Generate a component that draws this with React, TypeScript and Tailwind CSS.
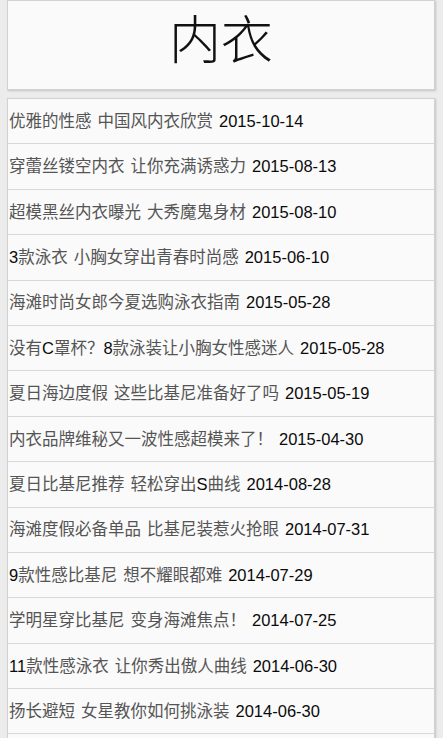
import React from "react";

const items: string[] = [
  "优雅的性感 中国风内衣欣赏 2015-10-14",
  "穿蕾丝镂空内衣 让你充满诱惑力 2015-08-13",
  "超模黑丝内衣曝光 大秀魔鬼身材 2015-08-10",
  "3款泳衣 小胸女穿出青春时尚感 2015-06-10",
  "海滩时尚女郎今夏选购泳衣指南 2015-05-28",
  "没有C罩杯？8款泳装让小胸女性感迷人 2015-05-28",
  "夏日海边度假 这些比基尼准备好了吗 2015-05-19",
  "内衣品牌维秘又一波性感超模来了！ 2015-04-30",
  "夏日比基尼推荐 轻松穿出S曲线 2014-08-28",
  "海滩度假必备单品 比基尼装惹火抢眼 2014-07-31",
  "9款性感比基尼 想不耀眼都难 2014-07-29",
  "学明星穿比基尼 变身海滩焦点！ 2014-07-25",
  "11款性感泳衣 让你秀出傲人曲线 2014-06-30",
  "扬长避短 女星教你如何挑泳装 2014-06-30",
];

const CJK = /[\u3000-\u9fff\uff00-\uffef]/;

function Runs({ text }: { text: string }) {
  const parts = text.match(/[\u3000-\u9fff\uff00-\uffef]+| |[^\u3000-\u9fff\uff00-\uffef ]+/g) || [];
  return (
    <span>
      {parts.map((p, i) => {
        if (p === " ") return <span key={i} className="inline-block w-[6px]" />;
        if (CJK.test(p))
          return (
            <span key={i} className="text-[#555555]">
              {p}
            </span>
          );
        return (
          <span key={i} className="text-[#0a0a0a]">
            {p}
          </span>
        );
      })}
    </span>
  );
}

export default function App() {
  return (
    <div
      className="h-[738px] overflow-hidden bg-[#ececec] pl-[7px] pr-[8px]"
      style={{ fontFamily: '"Liberation Sans", "Noto Sans CJK SC", sans-serif' }}
    >
      <div className="h-[90px] border border-[#d2d2d2] bg-[#fafafa] shadow-[1px_1px_2px_rgba(0,0,0,0.18)] flex justify-center">
        <h1
          className="text-[52px] leading-[72px] font-light text-[#111]"
          style={{ fontFamily: '"Noto Sans CJK SC", sans-serif' }}
        >
          内衣
        </h1>
      </div>
      <div className="mt-[8px] border border-[#d2d2d2] bg-[#fafafa] shadow-[1px_1px_2px_rgba(0,0,0,0.18)]">
        {items.map((t, i) => (
          <div
            key={i}
            className="h-[45.4px] border-b border-[#d8d8d8] flex items-center pl-[1px] text-[16.5px] whitespace-nowrap"
          >
            <Runs text={t} />
          </div>
        ))}
        <div className="h-[40px]" />
      </div>
    </div>
  );
}
